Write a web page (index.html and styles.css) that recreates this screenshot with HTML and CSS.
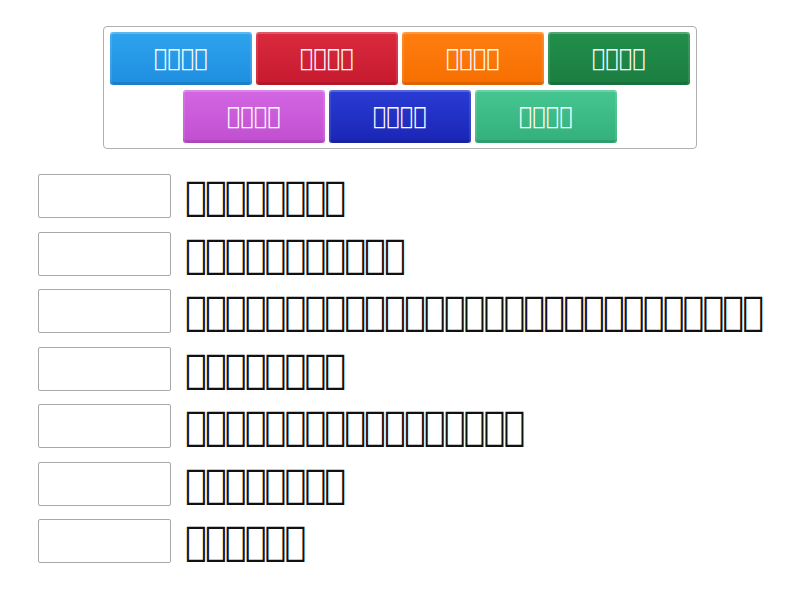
FILE: index.html
```html
<!DOCTYPE html>
<html>
<head>
<meta charset="utf-8">
<link rel="stylesheet" href="styles.css">
</head>
<body>
<div class="page">
  <div class="bank">
    <div class="row">
      <div class="tile blue">&#xE000;&#xE001;&#xE002;&#xE003;</div>
      <div class="tile red">&#xE004;&#xE005;&#xE006;&#xE007;</div>
      <div class="tile orange">&#xE008;&#xE009;&#xE00A;&#xE00B;</div>
      <div class="tile green">&#xE00C;&#xE00D;&#xE00E;&#xE00F;</div>
    </div>
    <div class="row">
      <div class="tile purple">&#xE010;&#xE011;&#xE012;&#xE013;</div>
      <div class="tile navy">&#xE014;&#xE015;&#xE016;&#xE017;</div>
      <div class="tile teal">&#xE018;&#xE019;&#xE01A;&#xE01B;</div>
    </div>
  </div>
  <div class="list">
    <div class="item"><div class="slot"></div><div class="text">&#xE020;&#xE021;&#xE022;&#xE023;&#xE024;&#xE025;&#xE026;&#xE027;</div></div>
    <div class="item"><div class="slot"></div><div class="text">&#xE030;&#xE031;&#xE032;&#xE033;&#xE034;&#xE035;&#xE036;&#xE037;&#xE038;&#xE039;&#xE03A;</div></div>
    <div class="item"><div class="slot"></div><div class="text">&#xE040;&#xE041;&#xE042;&#xE043;&#xE044;&#xE045;&#xE046;&#xE047;&#xE048;&#xE049;&#xE04A;&#xE04B;&#xE04C;&#xE04D;&#xE04E;&#xE04F;&#xE050;&#xE051;&#xE052;&#xE053;&#xE054;&#xE055;&#xE056;&#xE057;&#xE058;&#xE059;&#xE05A;&#xE05B;&#xE05C;</div></div>
    <div class="item"><div class="slot"></div><div class="text">&#xE060;&#xE061;&#xE062;&#xE063;&#xE064;&#xE065;&#xE066;&#xE067;</div></div>
    <div class="item"><div class="slot"></div><div class="text">&#xE070;&#xE071;&#xE072;&#xE073;&#xE074;&#xE075;&#xE076;&#xE077;&#xE078;&#xE079;&#xE07A;&#xE07B;&#xE07C;&#xE07D;&#xE07E;&#xE07F;&#xE080;</div></div>
    <div class="item"><div class="slot"></div><div class="text">&#xE090;&#xE091;&#xE092;&#xE093;&#xE094;&#xE095;&#xE096;&#xE097;</div></div>
    <div class="item"><div class="slot"></div><div class="text">&#xE0A0;&#xE0A1;&#xE0A2;&#xE0A3;&#xE0A4;&#xE0A5;</div></div>
  </div>
</div>
</body>
</html>
```

FILE: styles.css
```css
html, body { margin: 0; padding: 0; background: #fff; }
body { font-family: "DejaVu Sans Condensed", "DejaVu Sans", sans-serif; }
.page { padding-top: 26px; }
.bank {
  width: 592px;
  margin: 0 0 0 103px;
  border: 1px solid #b0b0b0;
  border-radius: 4px;
  padding: 5px 0 5px 0;
  display: flex;
  flex-direction: column;
  gap: 5px;
}
.row { display: flex; justify-content: center; gap: 4px; }
.tile {
  width: 142px;
  height: 53px;
  box-sizing: border-box;
  border-radius: 3px;
  color: #fff;
  font-size: 24px;
  letter-spacing: 0.6px;
  display: flex;
  align-items: center;
  justify-content: center;
  padding-bottom: 2px;
  box-shadow: inset 0 2px 0 rgba(255,255,255,0.22), inset 2px 0 0 rgba(255,255,255,0.1), inset -2px 0 0 rgba(255,255,255,0.1), inset 0 -3px 0 rgba(0,0,0,0.1);
}
.blue { background: linear-gradient(#2ea4ec, #1e8ee0); }
.red { background: linear-gradient(#d92a3e, #c81a2e); }
.orange { background: linear-gradient(#ff7e10, #f76e00); }
.green { background: linear-gradient(#228f4c, #1a7d40); }
.purple { background: linear-gradient(#d366e2, #c14fd0); }
.navy { background: linear-gradient(#2a3cd4, #1a25b5); }
.teal { background: linear-gradient(#45c690, #33b07b); }
.list { margin: 25px 0 0 38px; display: flex; flex-direction: column; gap: 13.5px; }
.item { display: flex; align-items: center; gap: 14px; height: 44px; }
.slot {
  width: 133px; height: 44px; box-sizing: border-box;
  border: 1px solid #a8a8a8; border-radius: 2px; flex: none;
}
.text { font-size: 40px; letter-spacing: -1.7px; color: #111; white-space: nowrap; line-height: 44px; }
```
